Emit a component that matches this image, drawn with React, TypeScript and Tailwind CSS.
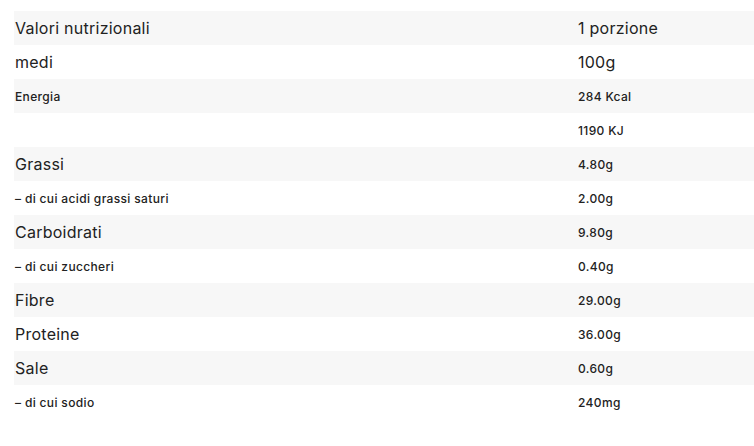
import React from "react";

const rows: { l: string; r: string; big?: boolean; bigR?: boolean }[] = [
  { l: "Valori nutrizionali", r: "1 porzione", big: true, bigR: true },
  { l: "medi", r: "100g", big: true, bigR: true },
  { l: "Energia", r: "284 Kcal" },
  { l: "", r: "1190 KJ" },
  { l: "Grassi", r: "4.80g", big: true },
  { l: "– di cui acidi grassi saturi", r: "2.00g" },
  { l: "Carboidrati", r: "9.80g", big: true },
  { l: "– di cui zuccheri", r: "0.40g" },
  { l: "Fibre", r: "29.00g", big: true },
  { l: "Proteine", r: "36.00g", big: true },
  { l: "Sale", r: "0.60g", big: true },
  { l: "– di cui sodio", r: "240mg" },
];

export default function App() {
  return (
    <div
      className="w-[754px] h-[446px] bg-white pt-[11px] pl-[14px] text-[#222]"
      style={{ fontFamily: "Inter, 'Liberation Sans', sans-serif" }}
    >
      {rows.map((row, i) => (
        <div
          key={i}
          className={`flex h-[34px] items-center ${i % 2 === 0 ? "bg-[#f7f7f7]" : "bg-white"}`}
        >
          <div
            className={`w-[564px] pl-px ${
              row.big ? "text-[16px] tracking-[0.25px] pb-px" : "text-[12px] tracking-[0.35px] font-medium pt-px"
            }`}
          >
            {row.l}
          </div>
          <div
            className={`flex-1 ${
              row.bigR ? "text-[16px] tracking-[0.25px] pb-px" : "text-[12px] tracking-[0.35px] font-medium pt-px"
            }`}
          >
            {row.r}
          </div>
        </div>
      ))}
    </div>
  );
}
